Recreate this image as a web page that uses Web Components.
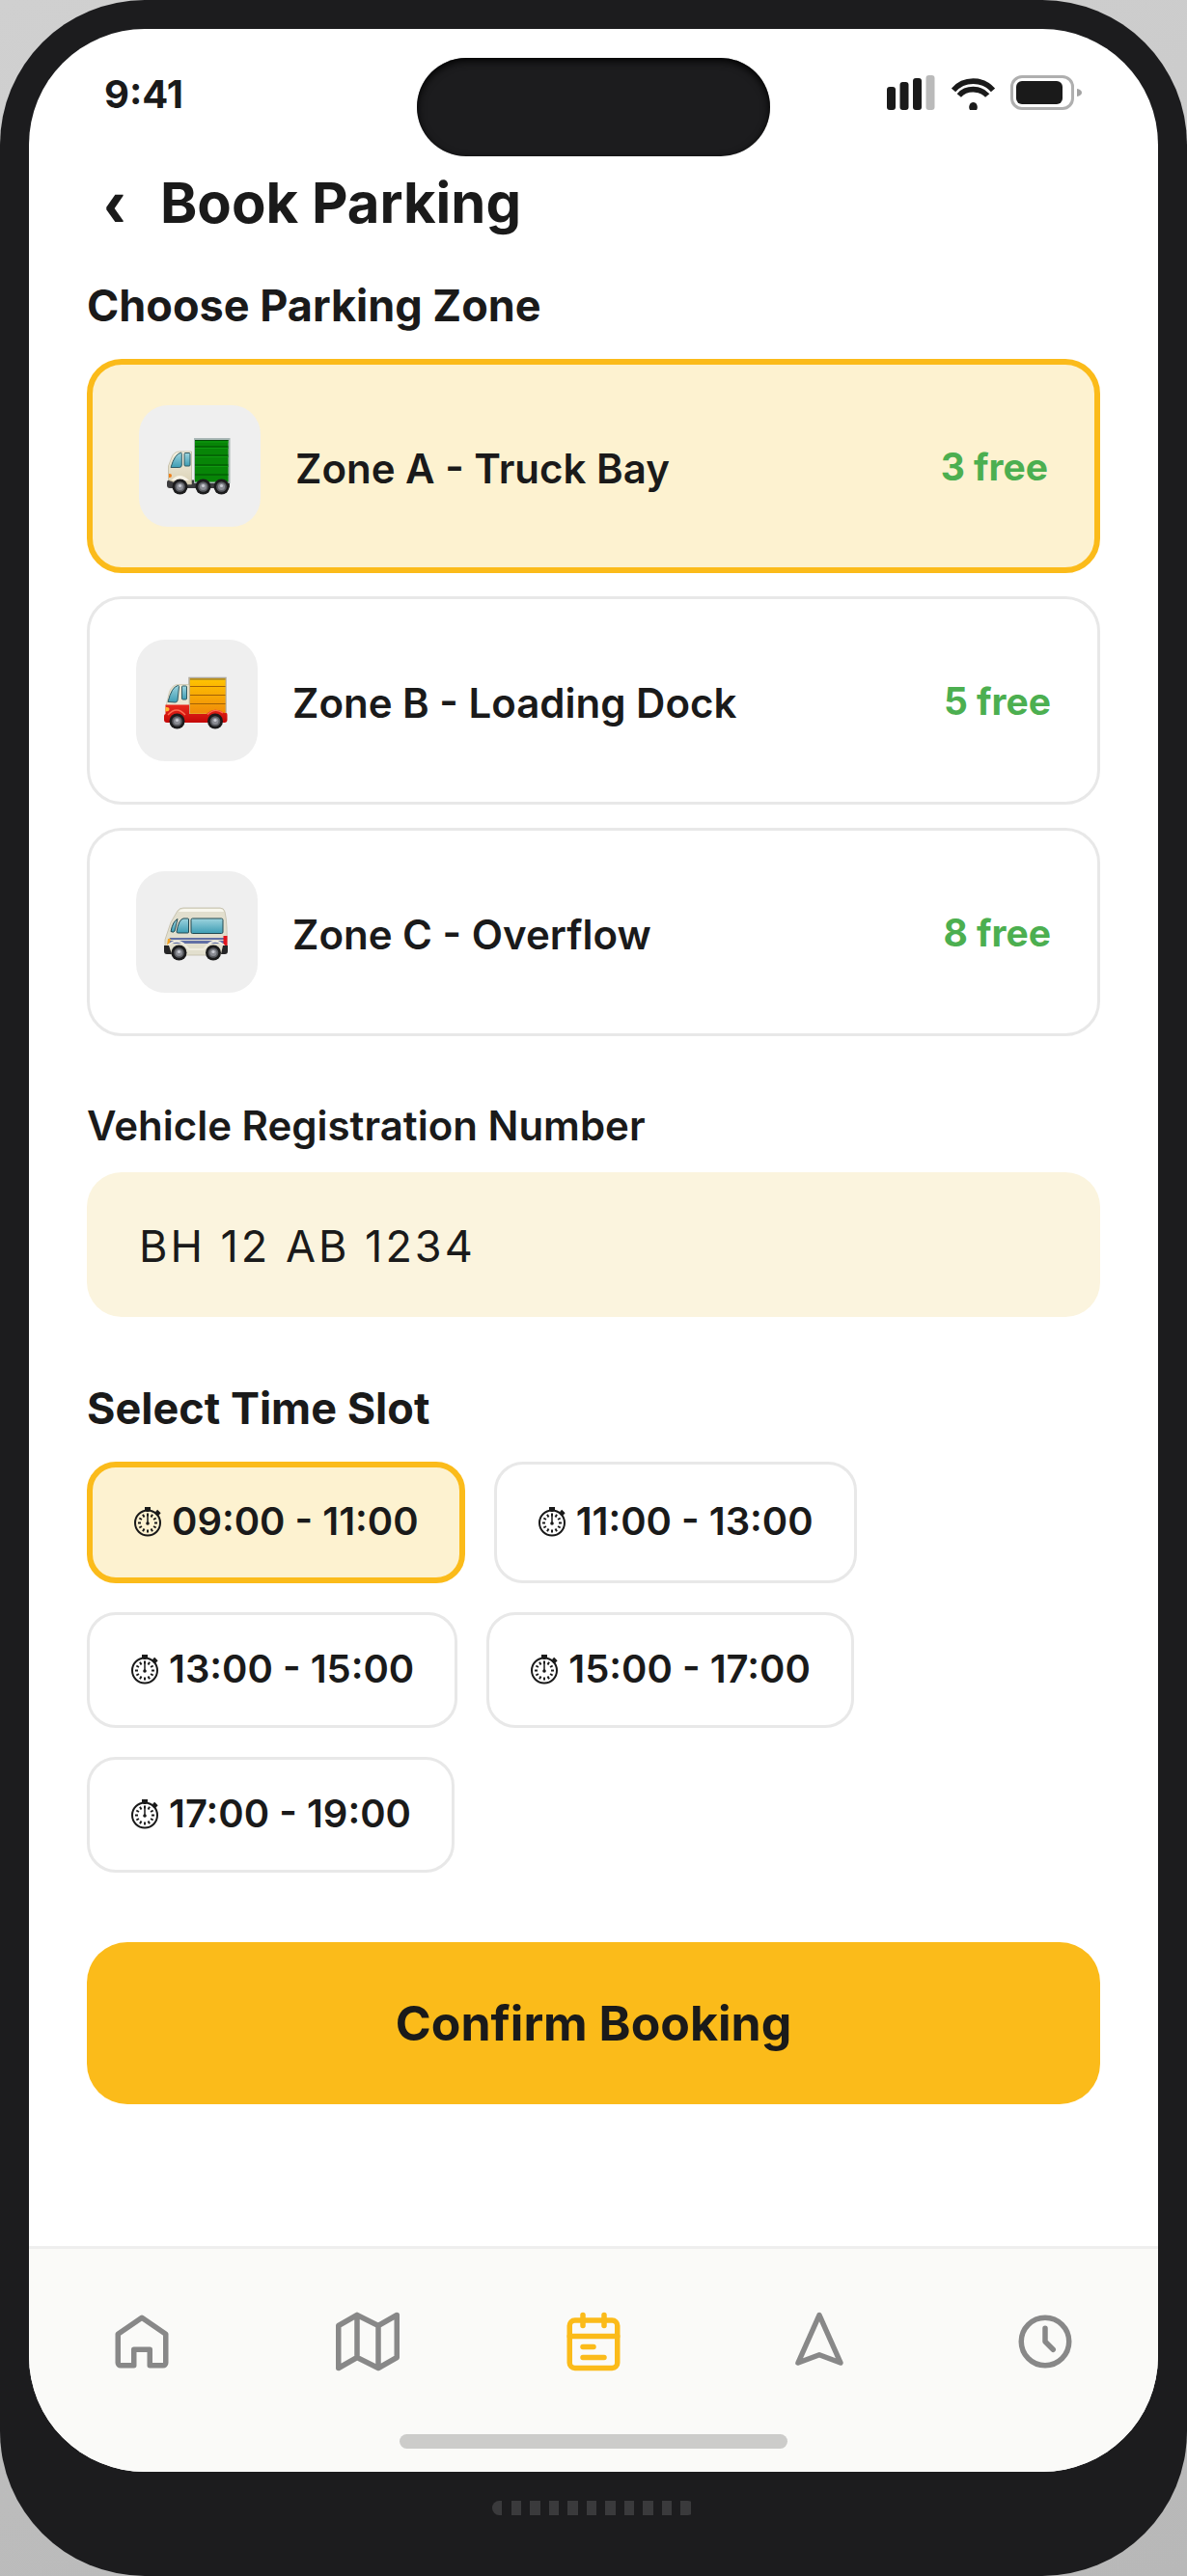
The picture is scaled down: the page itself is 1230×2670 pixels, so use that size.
<!DOCTYPE html>
<html lang="en">
<head>
<meta charset="utf-8">
<meta name="viewport" content="width=device-width, initial-scale=1">
<title>Book Parking</title>
<style>
  html, body { margin: 0; min-height: 100%; }
  body {
    background: linear-gradient(160deg, #d0d0d0, #b8b8b8);
    color: #1a1a1a;
    font-family: Inter, Roboto, "Liberation Sans", sans-serif;
    --accent: #fbbb1a;
    --tint: #fdf2d0;
    --line: #e8e8e8;
  }
</style>
</head>
<body>
<phone-frame>
  <status-bar slot="status" time="9:41"></status-bar>
  <screen-header>Book Parking</screen-header>
  <form-section heading="Choose Parking Zone">
    <zone-card vehicle="lorry" free="3" selected>Zone A - Truck Bay</zone-card>
    <zone-card vehicle="truck" free="5">Zone B - Loading Dock</zone-card>
    <zone-card vehicle="van" free="8">Zone C - Overflow</zone-card>
  </form-section>
  <plate-field label="Vehicle Registration Number" value="BH 12 AB 1234"></plate-field>
  <form-section heading="Select Time Slot" wrap>
    <time-slot selected>09:00 - 11:00</time-slot>
    <time-slot>11:00 - 13:00</time-slot>
    <time-slot>13:00 - 15:00</time-slot>
    <time-slot>15:00 - 17:00</time-slot>
    <time-slot>17:00 - 19:00</time-slot>
  </form-section>
  <primary-button>Confirm Booking</primary-button>
  <tab-bar slot="tabs" current="bookings"></tab-bar>
</phone-frame>

<script>
class BaseElement extends HTMLElement {
  connectedCallback() {
    if (this.shadowRoot) return;
    this.attachShadow({ mode: 'open' }).innerHTML =
      `<style>*{box-sizing:border-box}button,input{font:inherit;color:inherit;margin:0}svg{display:block}${this.styles()}</style>${this.render()}`;
  }
}

customElements.define('phone-frame', class extends BaseElement {
  styles() { return `
    :host { display: flex; box-sizing: border-box; min-height: 100vh; }
    .body { position: relative; flex: 1; display: flex; flex-direction: column; padding: 30px 30px 108px; background: #1c1c1e; border-radius: 150px; }
    .screen { position: relative; flex: 1; display: flex; flex-direction: column; overflow: hidden; background: #fff; border-radius: 120px; }
    main { flex: 1; display: flex; flex-direction: column; padding: 12px 60px 60px; }
    .island { position: absolute; top: 30px; left: 50%; width: 366px; height: 102px; margin-left: -183px; border-radius: 51px; background: #1c1c1e; box-shadow: inset 0 3px 9px #000; }
    .grille { position: absolute; bottom: 63px; left: 50%; width: 210px; height: 15px; margin-left: -105px; border-radius: 9px; background: repeating-linear-gradient(90deg, #3a3a3c 0 5%, transparent 5% 9.3%); }
  `; }
  render() { return `
    <div class="body">
      <div class="screen">
        <slot name="status"></slot>
        <main><slot></slot></main>
        <slot name="tabs"></slot>
        <div class="island"></div>
      </div>
      <div class="grille"></div>
    </div>`; }
});

customElements.define('status-bar', class extends BaseElement {
  styles() { return `
    :host { display: flex; align-items: center; justify-content: space-between; height: 132px; padding: 0 78px; box-sizing: border-box; }
    time { padding-top: 3px; font-size: 40px; font-weight: 700; line-height: 48px; }
    .icons { display: flex; align-items: center; gap: 16px; }
  `; }
  render() { return `
    <time>${this.getAttribute('time')}</time>
    <div class="icons">
      <svg width="51" height="36" viewBox="0 0 51 36" fill="#1a1a1a"><rect y="12" width="9" height="24" rx="3"/><rect x="13.5" y="7" width="9" height="29" rx="3"/><rect x="27" y="3" width="9" height="33" rx="3"/><rect x="40.500" width="9" height="36" rx="3" opacity=".3"/></svg>
      <svg width="45" height="36" viewBox="0 0 45 36" fill="none" stroke="#1a1a1a" stroke-width="5.6"><path d="M2 15.500C12.500 3 32.500 3 43 15.500"/><path d="M7.800 21C15 12.500 30 12.500 37.200 21"/><path d="M22.500 28c3.500 0 5.500 4.500 3.500 8h-7c-2-3.500 0-8 3.500-8z" fill="#1a1a1a" stroke="none"/></svg>
      <svg width="75" height="36" viewBox="0 0 75 36" fill="none"><rect x="1.500" y="1.500" width="63" height="33" rx="10.500" stroke="#1a1a1a" stroke-opacity=".35" stroke-width="3"/><rect x="6" y="6" width="48" height="24" rx="6" fill="#1a1a1a"/><path d="M69 14c3 .5 5 2 5 4s-2 3.500-5 4z" fill="#1a1a1a" opacity=".4"/></svg>
    </div>`; }
});

customElements.define('screen-header', class extends BaseElement {
  styles() { return `
    :host { display: flex; align-items: center; gap: 33px; padding: 0 15px; line-height: 72px; }
    button { border: 0; padding: 0; width: 28px; background: none; font-family: "Liberation Sans", Arial, sans-serif; font-size: 72px; font-weight: 700; line-height: 72px; text-align: center; cursor: pointer; }
    h1 { margin: 0; font-size: 58px; font-weight: 700; line-height: 72px; }
  `; }
  render() { return `<button type="button" aria-label="Back">‹</button><h1><slot></slot></h1>`; }
});

customElements.define('form-section', class extends BaseElement {
  styles() { return `
    :host { display: block; margin-top: 44px; }
    :host([wrap]) { margin-top: 68px; }
    h2 { margin: 0 0 28px; font-size: 45px; font-weight: 700; line-height: 54px; }
    .items { display: flex; flex-direction: column; gap: 24px; }
    :host([wrap]) .items { flex-flow: row wrap; gap: 30px; }
  `; }
  render() { return `<h2>${this.getAttribute('heading')}</h2><div class="items"><slot></slot></div>`; }
});

const wheel = (x, y) => `<circle cx="${x}" cy="${y}" r="8" fill="#1b1b1c"/><circle cx="${x}" cy="${y}" r="5.300" fill="#5b5d62"/><circle cx="${x}" cy="${y}" r="3.500" fill="#8b8d94"/><circle cx="${x}" cy="${y - 1}" r="1.600" fill="#c9cbd2"/>`;
const defs = id => `<defs>
  <linearGradient id="${id}-glass" x1="0" y1="0" x2="0" y2="1"><stop stop-color="#9ed4de"/><stop offset="1" stop-color="#3d9db4"/></linearGradient>
  <linearGradient id="${id}-cab" x1="0" y1="0" x2="0" y2="1"><stop stop-color="#f4f0e0"/><stop offset="1" stop-color="#d9d0b4"/></linearGradient>
  <linearGradient id="${id}-gold" x1="0" y1="0" x2="0" y2="1"><stop stop-color="#ffc400"/><stop offset="1" stop-color="#f08c0a"/></linearGradient>
  <linearGradient id="${id}-red" x1="0" y1="0" x2="0" y2="1"><stop stop-color="#e92a1c"/><stop offset="1" stop-color="#c40808"/></linearGradient>
</defs>`;
const vehicles = {
  lorry: `${defs('l')}<g transform="translate(-1 1)">
    <path d="M0 46q0-2.500 2.500-2.500H65V50q0 2-2 2H3q-3 0-3-3z" fill="#3c3c3e"/>
    <rect x="28" y="0" width="37.500" height="47" fill="#a9b7b6"/><rect x="29" y="2" width="34.500" height="43.500" fill="#078507"/>
    <path d="M29 2.500h34.500M29 9h34.500M29 18h34.500M29 28h34.500M29 38h34.500" stroke="#034d05" stroke-width="1.200"/>
    <path d="M29 4h34.500M29 10.500h34.500M29 19.500h34.500M29 29.500h34.500" stroke="#0f9a10" stroke-width="1"/>
    <path d="M1.500 43.500V29L5 20q2.300-6 8-6h12.500v34H14z" fill="url(#l-cab)" stroke="#bcb59b" stroke-width=".7"/>
    <path d="M4 30.500q4-14 10.500-15.300.8 0 .8 1V28q0 2.500-2.500 2.500z" fill="url(#l-glass)" stroke="#315b63"/>
    <rect x="18" y="15.500" width="6" height="13.500" rx="1" fill="url(#l-glass)" stroke="#315b63"/>
    <path d="M2 37q3-.5 3 2t-3 2z" fill="#f0801a"/><path d="M4.500 44Q13 34 23 44z" fill="#f7f3e6"/>
    ${wheel(13.5, 50.5)}${wheel(37.5, 50.5)}${wheel(56.5, 50.5)}</g>`,
  truck: `${defs('t')}<g transform="translate(-1 5)">
    <path d="M26 1.500H64v38H26z" fill="#f7a500" stroke="#b2ada0" stroke-width="1.500"/>
    <path d="M27 2.500h36.500V38H27z" fill="url(#t-gold)"/><path d="M27 10.500h36.500M27 19.500h36.500M27 28.500h36.500" stroke="#a36206" stroke-width="1"/><path d="M27 3h36.500" stroke="#7d6a3a"/>
    <path d="M2 31 5.500 16q3-7.500 9-7.500H26V31z" fill="#ece7d2" stroke="#bfb89e" stroke-width=".6"/>
    <path d="M4 26.500Q8 10.500 14.500 9.500q1 0 1 1L14 25q-.4 2-2.500 2z" fill="url(#t-glass)" stroke="#315b63"/>
    <rect x="18.500" y="10" width="5" height="14" rx="1" fill="url(#t-glass)" stroke="#315b63"/>
    <path d="M1.500 29.500H26V39H44Q53 31 62 38h2.500q1 0 1 2v5q0 3-3 3H3q-3 0-3-3v-4q0-1.500 1.500-2z" fill="url(#t-red)"/>
    <path d="M4 40Q13 30 22 40" stroke="#ff6d52" stroke-width="1.500" fill="none"/><path d="M45 39.500Q53 32 61 38" stroke="#ff6d52" stroke-width="1.200" fill="none"/>
    <path d="M1.500 32q4-.5 4 2t-4 2.500z" fill="#ffb733"/>
    ${wheel(13.5, 46.5)}${wheel(53, 46.5)}</g>`,
  van: `${defs('v')}<g transform="translate(-1 4)">
    <path d="M1 44V34L7 16 14 4q2-3 6-3h38q4 0 5 4 3 12 2 40l-8 5H8z" fill="#e2dfce" stroke="#c2bda8" stroke-width=".8"/>
    <path d="M15 5q2-3 6-3h37q3 0 4 3z" fill="#f8f7ee"/>
    <path d="M6 32h59v2H5zM4 35h61v3H4z" fill="#6270a5"/>
    <path d="M7 25.500Q9 15 14 12.500L11 25q-1 2-4 .5z" fill="url(#v-glass)" stroke="#244a52"/>
    <path d="M13 26q2-13 7-14h4.500q1 0 1 1v13q0 1-1 1h-10q-1.500 0-1.500-1z" fill="url(#v-glass)" stroke="#244a52"/>
    <rect x="28" y="12" width="33" height="15.500" rx="1.500" fill="url(#v-glass)" stroke="#244a52"/>
    <rect x="61.500" y="30" width="4" height="11" fill="#e3141c"/><path d="M4 33h3l-2 7H3z" fill="#f2a222"/>
    <path d="M3 41Q14 29 26 44H41Q52 29 63 41" stroke="#efecdf" stroke-width="2" fill="none"/>
    <path d="M0 40h5l3 9H3q-3 0-3-3zM61 40h5v6q0 3-3 3h-4z" fill="#252526"/>
    ${wheel(15.5, 47.5)}${wheel(51, 47.5)}</g>`
};

customElements.define('zone-card', class extends BaseElement {
  styles() { return `
    :host { display: block; }
    button { display: flex; align-items: center; gap: 36px; width: 100%; padding: 42px 48px; border: 3px solid var(--line); border-radius: 36px; background: #fff; text-align: left; cursor: pointer; }
    :host([selected]) button { border: 6px solid var(--accent); background: var(--tint); }
    .tile { flex: none; display: grid; place-items: center; width: 126px; height: 126px; border-radius: 30px; background: #efefef; }
    .tile svg { overflow: visible; }
    .name { flex: 1; padding-top: 5px; font-size: 42px; font-weight: 600; line-height: 51px; }
    .free { padding-top: 2px; font-size: 39px; font-weight: 700; line-height: 48px; color: #4caf50; }
  `; }
  render() { return `
    <button type="button" aria-pressed="${this.hasAttribute('selected')}">
      <span class="tile"><svg width="66" height="60" viewBox="0 0 66 60" aria-hidden="true">${vehicles[this.getAttribute('vehicle')]}</svg></span>
      <span class="name"><slot></slot></span>
      <span class="free">${this.getAttribute('free')} free</span>
    </button>`; }
});

customElements.define('plate-field', class extends BaseElement {
  styles() { return `
    :host { display: flex; flex-direction: column; gap: 21px; margin-top: 66px; }
    label { font-size: 42px; font-weight: 600; line-height: 54px; }
    input { width: 100%; height: 150px; padding: 2px 54px 0; border: 0; border-radius: 36px; background: #fbf4de; font-size: 45px; letter-spacing: 3px; }
  `; }
  render() { return `<label for="plate">${this.getAttribute('label')}</label><input id="plate" type="text" value="${this.getAttribute('value')}">`; }
});

customElements.define('time-slot', class extends BaseElement {
  styles() { return `
    :host { display: flex; }
    button { display: flex; align-items: center; gap: 10px; padding: 32px 42px 34px; border: 3px solid var(--line); border-radius: 30px; background: #fff; font-size: 40px; font-weight: 600; line-height: 48px; cursor: pointer; }
    :host([selected]) button { border: 6px solid var(--accent); background: var(--tint); }
  `; }
  render() {
    const ticks = Array.from({ length: 12 }, (_, i) => `<path d="M15 7.500v3" transform="rotate(${i * 30} 15 17.500)"/>`).join('');
    return `
    <button type="button" aria-pressed="${this.hasAttribute('selected')}">
      <svg width="30" height="32" viewBox="0 0 30 32" fill="none" stroke="#1a1a1a" stroke-width="2" aria-hidden="true"><circle cx="15" cy="17.500" r="13"/>${ticks}<path d="M15 18V8" stroke-width="1.500"/><circle cx="15" cy="18" r="1.800" fill="#1a1a1a" stroke="none"/><path d="M12 2.500h6M15 2v4M24 5l3.500 3.500M23.500 9 25.500 7" stroke-width="3.200"/></svg>
      <span><slot></slot></span>
    </button>`; }
});

customElements.define('primary-button', class extends BaseElement {
  styles() { return `
    :host { display: block; margin-top: 72px; }
    button { width: 100%; padding: 51px 48px; border: 0; border-radius: 42px; background: var(--accent); font-size: 50px; font-weight: 700; line-height: 66px; cursor: pointer; }
  `; }
  render() { return `<button type="button"><slot></slot></button>`; }
});

const tabs = [
  ['home', 'Home', '<path d="M3 9.200 12 3l9 6.200V20a1 1 0 0 1-1 1h-5v-6H9v6H4a1 1 0 0 1-1-1z"/>'],
  ['map', 'Map', '<path d="M1 6v16l7-4 8 4 7-4V2l-7 4-8-4zM8 2v16M16 6v16"/>'],
  ['bookings', 'Bookings', '<rect x="3" y="4" width="18" height="18" rx="2"/><path d="M8 2v4M16 2v4M3 10h18M8 14h4M8 18h8"/>'],
  ['navigate', 'Navigate', '<path d="M12 2 4 20l8-3 8 3z"/>'],
  ['history', 'History', '<circle cx="12" cy="12" r="9"/><path d="M12 7v5l3 3"/>']
];

customElements.define('tab-bar', class extends BaseElement {
  styles() { return `
    :host { display: flex; flex-direction: column; align-items: center; justify-content: space-between; gap: 30px; padding: 33px 0 24px; border-top: 3px solid #eee; background: #fafaf8; }
    nav { display: flex; width: 100%; }
    a { flex: 1; display: flex; justify-content: center; padding: 30px 0 33px; color: #888; }
    a[aria-current] { color: var(--accent); }
    .home { width: 402px; height: 15px; border-radius: 8px; background: #ccccca; }
  `; }
  render() {
    const current = this.getAttribute('current');
    return `<nav>${tabs.map(([id, label, art]) => `
      <a href="#${id}" aria-label="${label}"${id === current ? ' aria-current="page"' : ''}><svg width="66" height="66" viewBox="0 0 24 24" fill="none" stroke="currentColor" stroke-width="2" stroke-linecap="round" stroke-linejoin="round">${art}</svg></a>`).join('')}</nav>
      <div class="home"></div>`;
  }
});
</script>
</body>
</html>
